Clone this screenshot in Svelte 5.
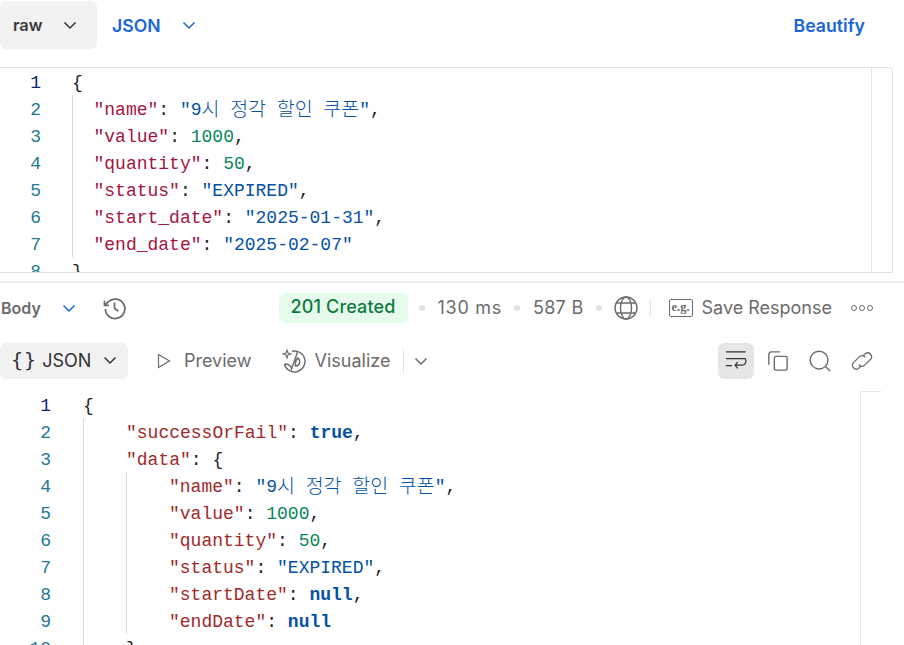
<script>
  const ko = '시 정각 할인 쿠폰';
  const reqRest = [
    [['k','"value"'],['p',': '],['n','1000'],['p',',']],
    [['k','"quantity"'],['p',': '],['n','50'],['p',',']],
    [['k','"status"'],['p',': '],['s','"EXPIRED"'],['p',',']],
    [['k','"start_date"'],['p',': '],['s','"2025-01-31"'],['p',',']],
    [['k','"end_date"'],['p',': '],['s','"2025-02-07"']]
  ];
  const resRest = [
    [['k','"value"'],['p',': '],['n','1000'],['p',',']],
    [['k','"quantity"'],['p',': '],['n','50'],['p',',']],
    [['k','"status"'],['p',': '],['s','"EXPIRED"'],['p',',']],
    [['k','"startDate"'],['p',': '],['b','null'],['p',',']],
    [['k','"endDate"'],['p',': '],['b','null']]
  ];
  const colon = ': ';
</script>

{#snippet chev(cls)}
  <svg class="chev {cls}" viewBox="0 0 16 16" fill="none" stroke="currentColor" stroke-width="1.5"><path d="M2.5 5.5 8 11l5.5-5.5"/></svg>
{/snippet}
{#snippet toks(line)}
  {#each line as t}<span class={t[0]}>{t[1]}</span>{/each}
{/snippet}
{#snippet name(key)}
  <span class="k">{key}</span><span class="p">{colon}</span><span class="s">"9<span class="ko">{ko}</span>"</span><span class="p">,</span>
{/snippet}

<div class="page">
  <header class="bar">
    <div class="pill raw"><span>raw</span>{@render chev('dark')}</div>
    <div class="lang"><span>JSON</span>{@render chev('')}</div>
    <span class="beautify">Beautify</span>
  </header>

  <section class="editor req">
    <div class="nums">
      {#each [1,2,3,4,5,6,7,8] as n}<div class:active={n === 1}>{n}</div>{/each}
    </div>
    <div class="code">
      <div class="ln"><span class="p">{'{'}</span></div>
      <div class="guide">
        <div class="ln">{@render name('"name"')}</div>
        {#each reqRest as l}<div class="ln">{@render toks(l)}</div>{/each}
      </div>
      <div class="ln"><span class="p">{'}'}</span></div>
    </div>
    <div class="scroll"></div>
  </section>

  <div class="split"></div>

  <div class="resbar">
    <span class="body">Body</span>
    {@render chev('')}
    <svg class="ico hist" viewBox="0 0 24 24" fill="none" stroke="#6b6b6b" stroke-width="1.6"><path d="M4 13a9 9 0 1 0 2.6-6.6L3.6 9.4M3.2 5.4v4.2h4.2M12.5 7v5.5l3.5 2.500"/></svg>
    <span class="spacer"></span>
    <span class="status">201 Created</span>
    <i class="dot"></i>
    <span class="meta ms">130 ms</span>
    <i class="dot"></i>
    <span class="meta size">587 B</span>
    <i class="dot"></i>
    <svg class="ico globe" viewBox="0 0 24 24" fill="none" stroke="#6b6b6b" stroke-width="1.4"><circle cx="12" cy="12" r="11"/><ellipse cx="12" cy="12" rx="5.5" ry="11"/><path d="M2.5 7h19M2.5 17h19"/></svg>
    <i class="vsep"></i>
    <span class="eg">e.g.</span>
    <span class="meta">Save Response</span>
    <span class="more"><i></i><i></i><i></i></span>
  </div>

  <div class="viewbar">
    <div class="pill fmt">
      <span class="brace">{'{ }'}</span><span>JSON</span>{@render chev('dark')}
    </div>
    <div class="tab">
      <svg class="ico play" viewBox="0 0 16 16" fill="none" stroke="#6b6b6b" stroke-width="1.2"><path d="M2.5 1.5v13l11-6.5z"/></svg>
      <span>Preview</span>
    </div>
    <div class="tab vis">
      <svg class="ico wand" viewBox="0 0 24 24" fill="none" stroke="#6b6b6b" stroke-width="1.4"><path d="M10 2.300A10.500 10.500 0 1 1 2.300 15M15.500 3 9 21.500M3 15c3 0 5 1 6.500 4M15.500 9c2 1 2.500 3 2 5s-2 3-4 3c-.5-3 .5-6 2-8z"/><path d="M5 1 6 4 9 5 6 6 5 9 4 6 1 5 4 4z" stroke-width="1.100"/></svg>
      <span>Visualize</span>
    </div>
    <i class="vsep tall"></i>
    {@render chev('grey')}
    <span class="spacer"></span>
    <div class="tools">
      <div class="tool on">
        <svg viewBox="0 0 24 24" fill="none" stroke="#333" stroke-width="1.3"><path d="M1 2h21.500M1 9.500h21.500M1 17h6.500M22 9.500c2 3 0 7-3.500 7h-7M14 13l-3 3.500 3 3.500"/></svg>
      </div>
      <div class="tool">
        <svg viewBox="0 0 24 24" fill="none" stroke="#6b6b6b" stroke-width="1.5"><rect x="8" y="7" width="14" height="15" rx="2"/><path d="M14 2H5a3 3 0 0 0-3 3v11"/></svg>
      </div>
      <div class="tool">
        <svg viewBox="0 0 24 24" fill="none" stroke="#6b6b6b" stroke-width="1.500"><circle cx="11" cy="11" r="9.700"/><path d="m18 18 5 5"/></svg>
      </div>
      <div class="tool">
        <svg viewBox="0 0 24 24" fill="none" stroke="#6b6b6b" stroke-width="1.400"><path d="m13 6.500 3-3a4.500 4.500 0 0 1 6 6l-7.500 7.500a4.500 4.500 0 0 1-6-1M11 17.500l-3 3a4.500 4.500 0 0 1-6-6L9.500 7a4.500 4.500 0 0 1 6 1"/></svg>
      </div>
    </div>
  </div>

  <section class="editor res">
    <div class="nums">
      {#each [1,2,3,4,5,6,7,8,9,10] as n}<div class:active={n === 1}>{n}</div>{/each}
    </div>
    <div class="code">
      <div class="ln"><span class="p">{'{'}</span></div>
      <div class="guide">
        <div class="ln"><span class="k">"successOrFail"</span><span class="p">{colon}</span><span class="b">true</span><span class="p">,</span></div>
        <div class="ln"><span class="k">"data"</span><span class="p">{colon + '{'}</span></div>
        <div class="guide">
          <div class="ln">{@render name('"name"')}</div>
          {#each resRest as l}<div class="ln">{@render toks(l)}</div>{/each}
        </div>
        <div class="ln"><span class="p">{'}'}</span></div>
      </div>
    </div>
    <div class="scroll"></div>
  </section>
</div>

<style>
  :global(body) { margin: 0; background: #fff; }
  .page {
    width: 904px; height: 645px; overflow: hidden;
    font-family: Inter, "Noto Sans", sans-serif; color: #6b6b6b;
    display: flex; flex-direction: column;
  }
  .spacer { flex: 1; }
  .chev { width: 16px; height: 16px; color: #1a66d6; flex: none; }
  .chev.dark { color: #333; }
  .chev.grey { color: #6b6b6b; }

  .bar { height: 48px; margin-top: 1px; display: flex; align-items: center; padding-right: 39px; flex: none; }
  .pill { background: #f2f2f2; border-radius: 6px; display: flex; align-items: center; flex: none; }
  .raw { height: 48px; width: 84px; padding-left: 13px; gap: 19px; font-size: 16.400px; font-weight: 600; color: #3a3a3a; }
  .lang { margin-left: 15px; display: flex; align-items: center; gap: 20px; font-size: 17.600px; font-weight: 600; color: #1a66d6; }
  .beautify { margin-left: auto; font-size: 17.700px; font-weight: 600; color: #1a66d6; }

  .editor { display: flex; overflow: hidden; font-family: "Liberation Mono", "Noto Sans CJK KR", monospace; font-size: 18px; line-height: 27px; }
  .nums { text-align: right; color: #237893; font-size: 18px; font-family: "Liberation Mono", monospace; flex: none; padding-top: 2px; }
  .nums .active { color: #0b216f; }
  .code { flex: 1; min-width: 0; }
  .ln { height: 27px; box-sizing: border-box; padding-top: 2px; display: flex; align-items: baseline; white-space: nowrap; }
  .ln span { white-space: pre; }
  .guide { border-left: 1px solid #d9d9d9; }
  .scroll { flex: none; width: 20px; border-left: 1px solid #e6e6e6; }

  .req { margin-top: 18px; height: 204px; width: 892px; flex: none; border-top: 1px solid #e4e4e4; border-bottom: 1px solid #e4e4e4; border-right: 1px solid #e4e4e4; border-radius: 0 4px 0 0; }
  .req .nums { width: 41px; margin-right: 31px; }
  .req .guide { padding-left: 20.500px; }

  .split { height: 2px; background: #ededed; margin-top: 8px; flex: none; }

  .resbar { height: 49px; display: flex; align-items: center; padding-right: 31px; font-size: 18px; flex: none; }
  .body { margin-left: 1px; font-size: 16px; font-weight: 600; color: #6b6b6b; margin-right: 20px; }
  .ico { flex: none; }
  .hist { width: 26px; height: 26px; margin-left: 24px; }
  .status { background: #e6fbed; color: #0e7a3d; font-weight: 500; border-radius: 6px; height: 30px; box-sizing: border-box; padding: 0 12px 2px; margin-right: -1px; display: flex; align-items: center; font-size: 18px; letter-spacing: 0.150px; }
  .dot { width: 6px; height: 6px; border-radius: 50%; background: #e2e2e2; margin: 0 13px 0 12px; flex: none; }
  .meta { color: #6b6b6b; }
  .ms { letter-spacing: 0.700px; }
  .size { letter-spacing: 0.300px; }
  .globe { width: 24px; height: 24px; margin-left: -1px; }
  .vsep { width: 1px; height: 18px; background: #e4e4e4; flex: none; margin: 0 18px 0 12px; }
  .eg { border: 1px solid #6b6b6b; border-radius: 2px; box-sizing: border-box; font-family: "Liberation Serif", serif; font-size: 12.500px; font-weight: 700; line-height: 15px; width: 24px; text-align: center; margin-right: 9px; height: 18px; flex: none; }
  .more { display: flex; gap: 2px; margin-left: 19px; }
  .more i { border: 1.300px solid #6b6b6b; border-radius: 50%; box-sizing: border-box; width: 6px; height: 6px; }

  .viewbar { height: 36px; margin-top: 11px; display: flex; align-items: center; padding-right: 24px; font-size: 18px; flex: none; }
  .fmt { height: 36px; width: 128px; padding: 0 0 2px 11px; box-sizing: border-box; color: #333; gap: 6px; }
  .fmt .chev { margin-left: 5px; }
  .brace { font-family: "DejaVu Sans Mono", monospace; font-size: 20px; word-spacing: -11px; white-space: pre; }
  .tab { display: flex; align-items: center; gap: 12px; margin-left: 28px; padding-bottom: 2px; }
  .tab svg { margin-top: 2px; }
  .play { width: 16px; height: 16px; }
  .vis { margin-left: 30px; gap: 9px; }
  .wand { width: 24px; height: 24px; }
  .vsep.tall { height: 24px; margin: 0 9px 0 13px; }
  .tools { display: flex; align-items: center; gap: 6px; }
  .tool { width: 36px; height: 36px; border-radius: 6px; display: flex; align-items: center; justify-content: center; }
  .tool svg { width: 22px; height: 22px; }
  .tool.on { background: #e6e6e6; }

  .res { margin-top: 12px; width: 881px; flex: 1; min-height: 0; }
  .res .nums { width: 51px; margin-right: 32px; }
  .res .guide { padding-left: 42px; }
  .res .scroll { border-top: 1px solid #e6e6e6; }

  .k { color: #a31540; }
  .res .k { color: #a02a2a; }
  .s { color: #0451a5; }
  .n { color: #098658; }
  .b { color: #0451a5; font-weight: 700; }
  .p { color: #222; }
  .ko { font-family: "Noto Sans CJK KR", sans-serif; font-size: 19.500px; font-weight: 300; line-height: 1; word-spacing: 6.400px; vertical-align: -1px; }
</style>
